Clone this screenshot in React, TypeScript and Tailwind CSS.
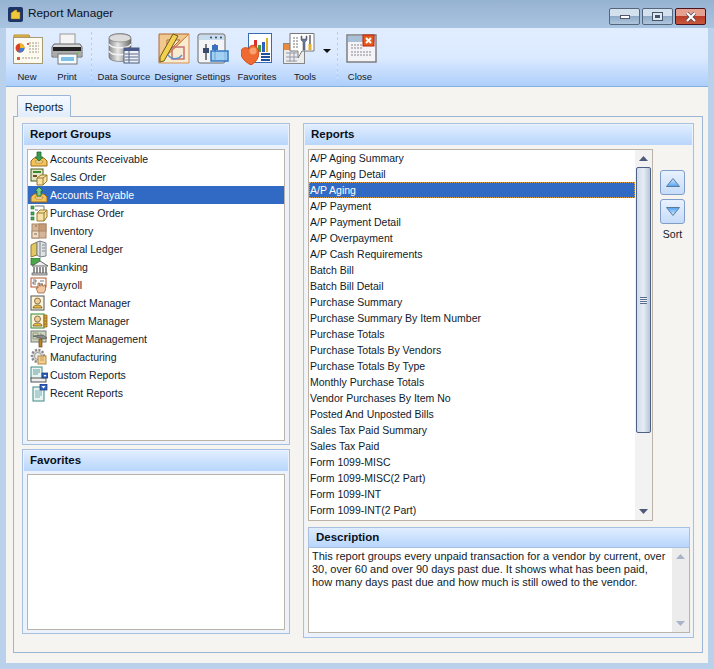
import type { ReactNode } from "react";

const GROUPS = [
  "Accounts Receivable",
  "Sales Order",
  "Accounts Payable",
  "Purchase Order",
  "Inventory",
  "General Ledger",
  "Banking",
  "Payroll",
  "Contact Manager",
  "System Manager",
  "Project Management",
  "Manufacturing",
  "Custom Reports",
  "Recent Reports",
];

const REPORTS = [
  "A/P Aging Summary",
  "A/P Aging Detail",
  "A/P Aging",
  "A/P Payment",
  "A/P Payment Detail",
  "A/P Overpayment",
  "A/P Cash Requirements",
  "Batch Bill",
  "Batch Bill Detail",
  "Purchase Summary",
  "Purchase Summary By Item Number",
  "Purchase Totals",
  "Purchase Totals By Vendors",
  "Purchase Totals By Type",
  "Monthly Purchase Totals",
  "Vendor Purchases By Item No",
  "Posted And Unposted Bills",
  "Sales Tax Paid Summary",
  "Sales Tax Paid",
  "Form 1099-MISC",
  "Form 1099-MISC(2 Part)",
  "Form 1099-INT",
  "Form 1099-INT(2 Part)",
];

function Svg({ size, view, children }: { size: number; view: number; children: ReactNode }) {
  return (
    <svg width={size} height={size} viewBox={`0 0 ${view} ${view}`} className="shrink-0">
      {children}
    </svg>
  );
}

function GroupIcon({ name }: { name: string }) {
  switch (name) {
    case "Accounts Receivable":
    case "Accounts Payable":
      return (
        <Svg size={18} view={18}>
          <path d="M1 11 L4 8 H14 L17 11 V16 H1 Z" fill="#f4c35a" stroke="#9a6a1c" />
          <path d="M5 11 H13 L12 13 H6 Z" fill="#fff3c8" stroke="#9a6a1c" strokeWidth=".6" />
          {name === "Accounts Payable" ? (
            <path d="M9 1 L13 5 H11 V10 H7 V5 H5 Z" fill="#7fd08a" stroke="#1f6b30" strokeWidth=".8" />
          ) : (
            <path d="M9 11 L13 7 H11 V2 H7 V7 H5 Z" fill="#3d9a4e" stroke="#1f6b30" strokeWidth=".8" />
          )}
        </Svg>
      );
    case "Sales Order":
      return (
        <Svg size={18} view={18}>
          <rect x="1" y="1" width="12" height="12" fill="#dfe7c8" stroke="#4d5a1a" />
          <rect x="3" y="3" width="8" height="2" fill="#3d8a2e" />
          <rect x="3" y="7" width="4" height="2" fill="#7a4a1c" />
          <path d="M7 10 L11 7 H17 V13 L13 17 H7 Z" fill="#f8e2a8" stroke="#9a7a2c" />
          <path d="M7 10 H13 V17 M13 10 L17 7" fill="none" stroke="#9a7a2c" />
        </Svg>
      );
    case "Purchase Order":
      return (
        <Svg size={18} view={18}>
          <rect x="1" y="2" width="3" height="3" fill="#4aa84a" stroke="#1f6b30" strokeWidth=".6" />
          <rect x="1" y="8" width="3" height="3" fill="#4aa84a" stroke="#1f6b30" strokeWidth=".6" />
          <rect x="1" y="13" width="3" height="3" fill="#4aa84a" stroke="#1f6b30" strokeWidth=".6" />
          <path d="M5 2 H14 V8 M5 6 H8" fill="none" stroke="#777" />
          <path d="M7 9 L10 6 H17 V13 L14 17 H7 Z" fill="#f8e2a8" stroke="#9a7a2c" />
          <path d="M7 9 H14 V17 M14 9 L17 6" fill="none" stroke="#9a7a2c" />
        </Svg>
      );
    case "Inventory":
      return (
        <Svg size={18} view={18}>
          <rect x="2" y="2" width="14" height="14" fill="#d8b596" stroke="#a8886a" />
          <rect x="2" y="9" width="7" height="7" fill="#eedccb" stroke="#a8886a" />
          <rect x="9" y="2" width="7" height="7" fill="#c89a78" stroke="#a8886a" />
          <path d="M4 12 H7 M5 4 H7" stroke="#8a6a4a" />
        </Svg>
      );
    case "General Ledger":
      return (
        <Svg size={18} view={18}>
          <path d="M1 5 L7 2 V15 L1 17 Z" fill="#e6c75f" stroke="#8a7a3a" />
          <path d="M7 2 L10 1 L16 3 V16 L10 17 L7 15 Z" fill="#dfe3e6" stroke="#7a828a" />
          <path d="M10 1 V17 M12 5 H15 M12 8 H15 M12 11 H15" stroke="#7a828a" fill="none" />
        </Svg>
      );
    case "Banking":
      return (
        <Svg size={18} view={18}>
          <rect x="1" y="0" width="9" height="7" fill="#4aa84a" stroke="#2a6b2a" strokeWidth=".7" />
          <path d="M2 8 L10 3 L18 8 Z" fill="#eef0f0" stroke="#666" />
          <path d="M4 9 V15 M7 9 V15 M10 9 V15 M13 9 V15 M16 9 V15" stroke="#555" strokeWidth="1.3" />
          <rect x="2" y="15" width="15" height="2" fill="#ccc" stroke="#555" strokeWidth=".7" />
        </Svg>
      );
    case "Payroll":
      return (
        <Svg size={18} view={18}>
          <rect x="1" y="2" width="15" height="9" fill="#fff" stroke="#b8562a" />
          <path d="M3 4 H6 V6 H3 V8 H6 M10 5 H14 M10 8 H13" fill="none" stroke="#555" strokeWidth=".8" />
          <path d="M8 17 L6 12 L8 12 V7 H9.5 V10 H11 V8 H12.5 V10 H14 V9 H15.5 V14 L14 17 Z" fill="#f3c7a0" stroke="#8a5a3a" strokeWidth=".7" />
        </Svg>
      );
    case "Contact Manager":
    case "System Manager":
      return (
        <Svg size={18} view={18}>
          <rect x="1" y="2" width="13" height="14" fill="#fdf4d8" stroke={name === "System Manager" ? "#2f8a34" : "#555"} />
          <circle cx="7.5" cy="7" r="3" fill="#f1cc94" stroke="#6a5a3a" strokeWidth=".8" />
          <path d="M3 14 C3 10 12 10 12 14 Z" fill="#e8b93a" stroke="#6a5a3a" strokeWidth=".8" />
          {name === "System Manager" && (
            <path d="M14 3 H17 V15 H14 Z M14 6 H17 M14 9 H17 M14 12 H17" fill="#e0a63a" stroke="#8a6a1c" strokeWidth=".8" />
          )}
        </Svg>
      );
    case "Project Management":
      return (
        <Svg size={18} view={18}>
          <rect x="1" y="1" width="15" height="11" fill="#cdd5c2" stroke="#7b7b70" />
          <path d="M3 3 H8 V9 H3 Z M10 3 L14 9" fill="none" stroke="#96a07c" />
          <path d="M3 6 L13 5 L17 8 L13 9 Z" fill="#8a8a8a" stroke="#555" strokeWidth=".7" />
          <rect x="9" y="9" width="3" height="8" fill="#b9822f" stroke="#6b4a1a" strokeWidth=".7" />
        </Svg>
      );
    case "Manufacturing":
      return (
        <Svg size={18} view={18}>
          <circle cx="8" cy="8" r="6" fill="#dcdcdc" stroke="#888" strokeWidth="2.5" strokeDasharray="2 1.5" />
          <circle cx="8" cy="8" r="3.5" fill="#eee" stroke="#999" />
          <rect x="8" y="8" width="8" height="8" fill="#f2cf90" stroke="#b08a48" />
          <path d="M10 10 H14 M10 12 H14" stroke="#b08a48" strokeWidth=".7" />
        </Svg>
      );
    case "Custom Reports":
      return (
        <Svg size={18} view={18}>
          <rect x="1" y="1" width="11" height="12" fill="#e8f4f2" stroke="#3f8a84" />
          <path d="M3 4 H10 M3 6 H10 M3 8 H8" stroke="#3f8a84" strokeWidth=".8" />
          <rect x="1" y="12" width="15" height="4" fill="#eee" stroke="#555" />
          <rect x="12" y="7" width="6" height="5" fill="#2f62c0" stroke="#14306a" strokeWidth=".7" />
          <path d="M13.5 9 H16.5 L15 11 Z" fill="#fff" />
        </Svg>
      );
    default:
      return (
        <Svg size={18} view={18}>
          <rect x="3" y="3" width="11" height="14" fill="#e8f4f2" stroke="#3f8a84" />
          <path d="M5 7 H12 M5 9 H12 M5 11 H12 M5 13 H10" stroke="#5aa0a8" strokeWidth=".8" />
          <rect x="10" y="0" width="7" height="6" fill="#2f62c0" stroke="#14306a" strokeWidth=".7" />
          <path d="M11.5 2 H15.5 L13.5 4.5 Z" fill="#fff" />
        </Svg>
      );
  }
}

function NewIcon() {
  return (
    <Svg size={32} view={32}>
      <path d="M2 2 H17 L18 4 H2 Z" fill="#f3c95a" stroke="#b88a2a" />
      <rect x="1.5" y="4.5" width="29" height="26" fill="#fdfaf0" stroke="#a89a72" />
      <circle cx="8" cy="15" r="4.5" fill="#d8402c" />
      <path d="M8 15 V10.5 A4.5 4.5 0 0 1 12.5 15 Z" fill="#f0b92a" />
      <path d="M8 15 H12.5 A4.5 4.5 0 0 1 6 19 Z" fill="#3c7bd0" />
      <path d="M17 10 H27 M17 13 H27 M17 16 H27 M17 19 H27 M10 25 H27" stroke="#a09a8a" strokeDasharray="2 1" />
      <rect x="5" y="24" width="3" height="3" fill="#d8603c" />
      <rect x="15" y="10" width="2" height="2" fill="#d8603c" />
    </Svg>
  );
}

function PrintIcon() {
  return (
    <Svg size={32} view={32}>
      <rect x="9" y="1" width="15" height="11" fill="#f4f4f4" stroke="#999" />
      <path d="M3 11 H29 L31 14 V24 H1 V14 Z" fill="#d8d8d8" stroke="#666" />
      <rect x="2" y="14" width="28" height="4" fill="#222" />
      <rect x="2" y="18" width="28" height="5" fill="#aaa" />
      <rect x="7" y="21" width="19" height="10" fill="#f4fbff" stroke="#777" />
      <rect x="10" y="24" width="13" height="4" fill="#7fc0e8" />
      <circle cx="27" cy="20" r="1" fill="#6c4" />
    </Svg>
  );
}

function DataSourceIcon() {
  return (
    <Svg size={32} view={32}>
      <defs>
        <linearGradient id="cyl" x1="0" x2="1" y1="0" y2="0">
          <stop offset="0" stopColor="#8a8a8a" />
          <stop offset=".4" stopColor="#e8e8e8" />
          <stop offset="1" stopColor="#6a6a6a" />
        </linearGradient>
      </defs>
      <path d="M1 5 C1 -1 23 -1 23 5 V24 C23 30 1 30 1 24 Z" fill="url(#cyl)" stroke="#666" strokeWidth=".6" />
      <ellipse cx="12" cy="5" rx="11" ry="4" fill="#dcdcdc" stroke="#777" strokeWidth=".6" />
      <path d="M1 11 C3 16 21 16 23 11 M1 18 C3 23 21 23 23 18" fill="none" stroke="#f4f4f4" strokeWidth="1.4" />
      <rect x="16" y="15" width="15" height="15" fill="#eef1f6" stroke="#4a5a7a" />
      <rect x="16" y="15" width="15" height="3" fill="#4a5a8a" />
      <path d="M17 21 H30 M17 24 H30 M17 27 H30 M21 18 V30" stroke="#5a6a8a" />
    </Svg>
  );
}

function DesignerIcon() {
  return (
    <Svg size={32} view={32}>
      <path d="M1 1 H31 V30 H1 Z" fill="#f8ecd0" />
      <path d="M1 1 H31 L1 30 Z M9 7 H22 L9 20 Z" fill="#f0c890" stroke="#b0682c" fillRule="evenodd" />
      <path d="M31 1 V30 H1 Z" fill="none" stroke="#d89050" />
      <rect x="14" y="14" width="12" height="12" fill="none" stroke="#c87070" strokeWidth="1.5" />
      <path d="M15 1 L20 3 L6 28 L2 29 L2 24 Z" fill="#f4d050" stroke="#6a5a1c" />
      <path d="M10 22 C14 27 20 27 24 22" fill="none" stroke="#5a90d0" strokeWidth="1.3" />
    </Svg>
  );
}

function SettingsIcon() {
  return (
    <Svg size={32} view={32}>
      <rect x="1" y="1" width="27" height="29" rx="2" fill="#f2f4f8" stroke="#666" />
      <rect x="2" y="2" width="25" height="5" fill="#c8dcf0" />
      <circle cx="14" cy="4.5" r="1" fill="#345" />
      <circle cx="19" cy="4.5" r="1" fill="#345" />
      <circle cx="24" cy="4.5" r="1" fill="#345" />
      <path d="M9 11 V27 M18 11 V27" stroke="#555" strokeWidth="1.5" />
      <rect x="6" y="15" width="6" height="5" fill="#3a4a6a" />
      <rect x="15" y="12" width="6" height="5" fill="#3a70c0" />
      <rect x="14" y="18" width="17" height="10" fill="#8cc8f4" fillOpacity=".8" stroke="#2a70c0" strokeWidth="1.4" />
    </Svg>
  );
}

function FavoritesIcon() {
  return (
    <Svg size={32} view={32}>
      <rect x="7.5" y="0.5" width="23" height="29" fill="#fff" stroke="#3a6ab0" />
      <rect x="13" y="7" width="3" height="12" fill="#d83030" />
      <rect x="17" y="12" width="3" height="7" fill="#40a040" />
      <rect x="21" y="9" width="3" height="10" fill="#3060c0" />
      <rect x="25" y="5" width="2" height="14" fill="#e0b020" />
      <path d="M20 21 H29 M20 24 H29 M20 27 H29" stroke="#2050a0" strokeWidth="2" />
      <path d="M10 32 C2 28 -1 22 0 18 C1 14 6 14 8 16 C8 11 15 11 17 16 C19 22 17 28 10 32 Z" fill="#ee6a30" stroke="#d04c18" />
      <circle cx="12" cy="18" r="3.5" fill="#f8a070" />
    </Svg>
  );
}

function ToolsIcon() {
  return (
    <Svg size={32} view={32}>
      <rect x="0.5" y="10.5" width="21" height="20" fill="#ececec" stroke="#888" />
      <rect x="1" y="11" width="11" height="6" fill="#e88a40" />
      <path d="M3 20 H14 M3 24 H14 M3 28 H14 M7 19 V29 M11 19 V29" stroke="#99a" />
      <path d="M7 0.5 H31 V18 H19 L15 25 V18 H7 Z" fill="#fff" stroke="#777" />
      <path d="M10 5 H16 M10 8 H16 M10 11 H16 M10 14 H15" stroke="#777" strokeDasharray="2 1" />
      <path d="M18 3 V7 L20 9 V17 H22 V9 L24 7 V3 L23 3 V6 H19 V3 Z" fill="#6a7a9a" stroke="#445" strokeWidth=".5" />
      <path d="M27 2 V11" stroke="#888" strokeWidth="2" />
      <rect x="25.5" y="11" width="3" height="6" fill="#e8b030" />
    </Svg>
  );
}

function CloseIcon() {
  return (
    <Svg size={32} view={32}>
      <rect x="1" y="2" width="29" height="27" fill="#f4f4f8" stroke="#777" strokeWidth="1.4" />
      <rect x="2" y="3" width="27" height="6" fill="#a8c0d8" />
      <path d="M5 12 H16 M5 15 H16 M5 19 H26 M5 22 H26" stroke="#888" strokeDasharray="2 1" />
      <rect x="17" y="2" width="11" height="11" fill="#e85a18" stroke="#c02010" />
      <path d="M20 5 L25 10 M25 5 L20 10" stroke="#fff" strokeWidth="2" />
    </Svg>
  );
}

function ToolButton({ label, icon, className, iconClass }: { label: string; icon: ReactNode; className: string; iconClass?: string }) {
  return (
    <div className={`flex flex-col items-center ${className}`}>
      <div className={`h-[34px] flex items-center ${iconClass ?? ""}`}>{icon}</div>
      <span className="mt-[4px] text-[9.5px] leading-[13px] text-[#111a2a] whitespace-nowrap">{label}</span>
    </div>
  );
}

function ToolSep() {
  return <div className="w-px h-[50px] border-l border-dashed border-[#b4cdf0] bg-white/40 shrink-0" />;
}

function Panel({ title, className, children }: { title: string; className?: string; children: ReactNode }) {
  return (
    <div className={`border border-[#a7c0e0] bg-[#ebf2fb] flex flex-col p-px ${className ?? ""}`}>
      <div className="h-[20px] shrink-0 bg-gradient-to-b from-[#e0edff] to-[#b8d6fc] px-[6px] flex items-center font-bold text-[11.5px] text-[#08101c]">
        {title}
      </div>
      {children}
    </div>
  );
}

function ScrollArrow({ up, color }: { up?: boolean; color: string }) {
  return (
    <svg width="9" height="5" viewBox="0 0 9 5">
      <path d={up ? "M0 5 L4.5 0 L9 5 Z" : "M0 0 L9 0 L4.5 5 Z"} fill={color} />
    </svg>
  );
}

function SortButton({ up }: { up?: boolean }) {
  return (
    <div className="w-[25px] h-[25px] rounded-[3px] border border-[#7f9dc8] bg-gradient-to-b from-[#e8f1fe] to-[#c6dcf9] flex items-center justify-center">
      <svg width="14" height="9" viewBox="0 0 14 9">
        <defs>
          <linearGradient id={up ? "sortU" : "sortD"} x1="0" x2="0" y1="0" y2="1">
            <stop offset="0" stopColor={up ? "#d8ecff" : "#4ea2f4"} />
            <stop offset="1" stopColor={up ? "#4ea2f4" : "#d8ecff"} />
          </linearGradient>
        </defs>
        <path
          d={up ? "M.5 8.5 L7 .5 L13.5 8.5 Z" : "M.5 .5 L13.5 .5 L7 8.5 Z"}
          fill={`url(#${up ? "sortU" : "sortD"})`}
          stroke="#5a7a9a"
        />
      </svg>
    </div>
  );
}

export default function App() {
  return (
    <div
      className="w-[714px] h-[669px] overflow-hidden flex flex-col bg-[#b9d1ea] text-[11px] text-[#111a2a]"
      style={{ fontFamily: '"Liberation Sans", Arial, sans-serif' }}
    >
      {/* Title bar */}
      <div className="h-[28px] shrink-0 bg-gradient-to-b from-[#97b3d2] to-[#a9c4e0] flex items-center pl-[8px] pr-[8px]">
        <div className="w-[15px] h-[15px] rounded-[2px] bg-[#1d3565] flex items-center justify-center">
          <svg width="11" height="11" viewBox="0 0 11 11">
            <path d="M1 4 L5 1 H7 V3 H10 V10 H1 Z" fill="#f0c83c" stroke="#8a6a1c" strokeWidth=".5" />
          </svg>
        </div>
        <span className="ml-[5px] text-[11.8px] text-[#0a1220]">Report Manager</span>
        <div className="ml-auto flex gap-[2px] self-start mt-[8px]">
          <div className="w-[31px] h-[17px] rounded-[2px] border border-[#55667c] bg-[linear-gradient(#d3e0ee_0_50%,#8fabc8_50%,#b0c6dc)] flex items-center justify-center">
            <div className="w-[10px] h-[4px] mt-[1px] bg-white border border-[#556]" />
          </div>
          <div className="w-[31px] h-[17px] rounded-[2px] border border-[#55667c] bg-[linear-gradient(#d3e0ee_0_50%,#8fabc8_50%,#b0c6dc)] flex items-center justify-center">
            <div className="w-[11px] h-[9px] bg-[#dfe7f0] border border-[#45546a] flex items-center justify-center">
              <div className="w-[5px] h-[3px] bg-[#45546a]" />
            </div>
          </div>
          <div className="w-[31px] h-[17px] rounded-[2px] border border-[#4a1420] bg-[linear-gradient(#e5a090_0_50%,#bb3c28_50%,#c8583c)] flex items-center justify-center">
            <svg width="12" height="10" viewBox="0 0 12 10">
              <path d="M2 1 L10 9 M10 1 L2 9" stroke="#445" strokeWidth="3.4" />
              <path d="M2 1 L10 9 M10 1 L2 9" stroke="#fff" strokeWidth="2.2" />
            </svg>
          </div>
        </div>
      </div>

      <div className="flex-1 min-h-0 flex flex-col mx-[6px] mb-[6px]">
        {/* Toolbar */}
        <div className="h-[59px] shrink-0 border-b border-[#83aee4] bg-gradient-to-b from-[#e1edff] via-[#dceaff] to-[#aecffb] flex items-start pt-[4px]">
          <ToolButton label="New" icon={<NewIcon />} className="w-[42px]" iconClass="ml-[2px]" />
          <ToolButton label="Print" icon={<PrintIcon />} className="w-[38px]" />
          <div className="ml-[5px] mr-[6px]"><ToolSep /></div>
          <ToolButton label="Data Source" icon={<DataSourceIcon />} className="w-[52px]" />
          <ToolButton label="Designer" icon={<DesignerIcon />} className="w-[37px] ml-[5px]" />
          <ToolButton label="Settings" icon={<SettingsIcon />} className="w-[34px] ml-[4px]" />
          <ToolButton label="Favorites" icon={<FavoritesIcon />} className="w-[40px] ml-[7px]" />
          <ToolButton label="Tools" icon={<ToolsIcon />} className="w-[34px] ml-[11px]" iconClass="mr-[12px]" />
          <div className="ml-[1px] mt-[17px] w-0 h-0 border-x-[4px] border-x-transparent border-t-[4px] border-t-[#111]" />
          <div className="ml-[6px] mr-[6px]"><ToolSep /></div>
          <ToolButton label="Close" icon={<CloseIcon />} className="w-[32px]" iconClass="ml-[4px]" />
        </div>

        {/* Content */}
        <div className="flex-1 min-h-0 bg-[#f5f4f0] pl-[7px] pr-[5px] pt-[8px] pb-[10px] flex flex-col">
          <div className="h-[22px] shrink-0 w-[54px] ml-[4px] -mb-px pt-[2px] relative z-10 border border-[#9db5d5] border-b-0 rounded-t-[2px] bg-gradient-to-b from-[#f5f9ff] to-[#e2edfb] flex items-center justify-center text-[11px]">
            Reports
          </div>
          <div className="flex-1 min-h-0 border border-[#9db5d5] pt-[6px] pl-[8px] pr-[8px] pb-[14px] flex gap-[13px]">
            {/* Left column */}
            <div className="w-[268px] shrink-0 flex flex-col gap-[4px]">
              <Panel title="Report Groups" className="h-[322px]">
                <div className="mx-[3px] mt-[4px] mb-[2px] flex-1 border border-[#bcb3a8] bg-white">
                  {GROUPS.map((g) => (
                    <div
                      key={g}
                      className={`h-[18px] flex items-center gap-[2px] pl-[2px] text-[10.5px] ${
                        g === "Accounts Payable" ? "bg-[#316ac5] text-white" : ""
                      }`}
                    >
                      <GroupIcon name={g} />
                      <span className="whitespace-nowrap pt-[2px]">{g}</span>
                    </div>
                  ))}
                </div>
              </Panel>
              <Panel title="Favorites" className="h-[185px]">
                <div className="mx-[3px] mt-[3px] mb-[2px] flex-1 border border-[#bcb3a8] bg-white" />
              </Panel>
            </div>

            {/* Right column */}
            <div className="w-[391px] shrink-0 border border-[#a7c0e0] bg-[#ebf2fb] flex flex-col">
              <div className="h-[20px] shrink-0 mx-px mt-px bg-gradient-to-b from-[#e0edff] to-[#b8d6fc] px-[6px] flex items-center font-bold text-[11.5px] text-[#08101c]">
                Reports
              </div>
              <div className="flex-1 min-h-0 bg-[#f5f4f0] mx-px mb-[4px] pt-[4px] pl-[3px] pr-[2px] flex flex-col">
                <div className="flex gap-[7px] shrink-0">
                  <div className="w-[345px] h-[372px] border border-[#bcb3a8] bg-white flex overflow-hidden">
                    <div className="flex-1 min-w-0">
                      {REPORTS.map((r) => (
                        <div
                          key={r}
                          className={`h-[16px] flex items-center pl-px pt-[2px] text-[10.5px] whitespace-nowrap ${
                            r === "A/P Aging"
                              ? "bg-[#316ac5] text-white outline-1 -outline-offset-1 outline-dotted outline-[#e0a040]"
                              : ""
                          }`}
                        >
                          {r}
                        </div>
                      ))}
                    </div>
                    <div className="w-[17px] shrink-0 bg-[#f2f2f2] flex flex-col items-center">
                      <div className="h-[17px] shrink-0 flex items-center justify-center">
                        <ScrollArrow up color="#4d5a78" />
                      </div>
                      <div className="w-[15px] h-[266px] rounded-[2px] border border-[#4d6185] bg-gradient-to-r from-[#d2dcea] via-[#e6ecf4] to-[#b8c6da] flex items-center justify-center">
                        <div className="w-[7px] h-[7px] bg-[repeating-linear-gradient(#5a6d8c_0_1px,#eef2f8_1px_2px)]" />
                      </div>
                      <div className="mt-auto h-[17px] shrink-0 flex items-center justify-center">
                        <ScrollArrow color="#4d5a78" />
                      </div>
                    </div>
                  </div>
                  <div className="flex flex-col items-center gap-[4px] pt-[21px]">
                    <SortButton up />
                    <SortButton />
                    <span className="text-[10.5px] leading-[13px]">Sort</span>
                  </div>
                </div>
                <div className="mt-[6px] flex-1 min-h-0 flex flex-col">
                  <div className="h-[21px] shrink-0 border border-[#a7c0e0] bg-gradient-to-b from-[#e0edff] to-[#b8d6fc] px-[7px] flex items-center font-bold text-[11.5px] text-[#08101c]">
                    Description
                  </div>
                  <div className="flex-1 border border-t-0 border-[#bcb3a8] bg-white flex">
                    <p className="flex-1 min-w-0 pl-[3px] pr-[6px] pt-[2px] text-[11px] leading-[13px]">
                      This report groups every unpaid transaction for a vendor by current, over 30, over 60 and over 90 days past due. It shows what has been paid, how many days past due and how much is still owed to the vendor.
                    </p>
                    <div className="w-[17px] shrink-0 bg-[#ececec] flex flex-col items-center justify-between py-[6px]">
                      <ScrollArrow up color="#a8b4c8" />
                      <ScrollArrow color="#a8b4c8" />
                    </div>
                  </div>
                </div>
              </div>
            </div>
          </div>
        </div>
      </div>
    </div>
  );
}
